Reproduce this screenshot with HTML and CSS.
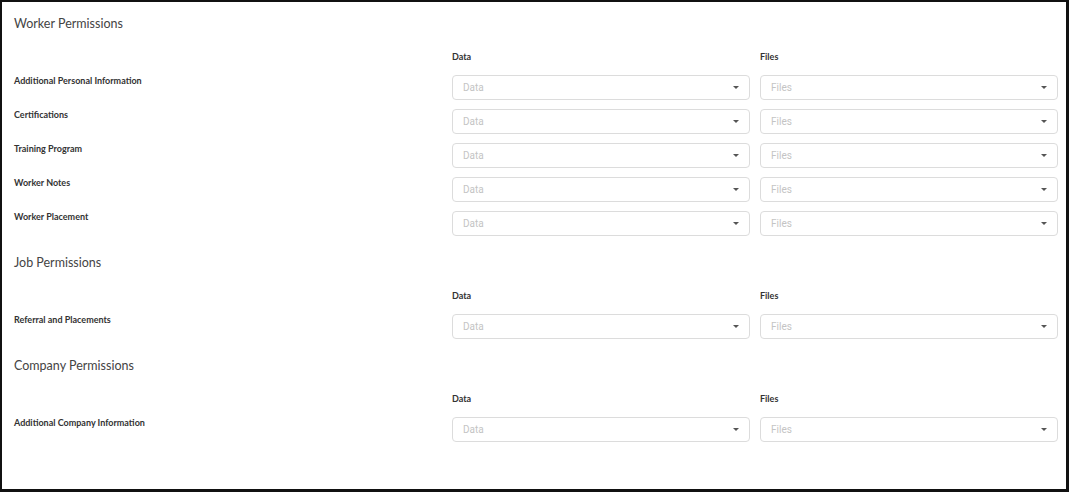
FILE: index.html
```html
<!DOCTYPE html>
<html>
<head>
<meta charset="utf-8">
<link rel="stylesheet" href="styles.css">
</head>
<body>
<div class="panel">
  <section class="group">
    <h2 class="group-title">Worker Permissions</h2>
    <div class="grid">
      <div></div><div class="col-head">Data</div><div class="col-head">Files</div>
      <div class="row-label">Additional Personal Information</div>
      <div class="select"><span>Data</span><i class="caret"></i></div>
      <div class="select"><span>Files</span><i class="caret"></i></div>
      <div class="row-label">Certifications</div>
      <div class="select"><span>Data</span><i class="caret"></i></div>
      <div class="select"><span>Files</span><i class="caret"></i></div>
      <div class="row-label">Training Program</div>
      <div class="select"><span>Data</span><i class="caret"></i></div>
      <div class="select"><span>Files</span><i class="caret"></i></div>
      <div class="row-label">Worker Notes</div>
      <div class="select"><span>Data</span><i class="caret"></i></div>
      <div class="select"><span>Files</span><i class="caret"></i></div>
      <div class="row-label">Worker Placement</div>
      <div class="select"><span>Data</span><i class="caret"></i></div>
      <div class="select"><span>Files</span><i class="caret"></i></div>
    </div>
  </section>
  <section class="group">
    <h2 class="group-title">Job Permissions</h2>
    <div class="grid">
      <div></div><div class="col-head">Data</div><div class="col-head">Files</div>
      <div class="row-label">Referral and Placements</div>
      <div class="select"><span>Data</span><i class="caret"></i></div>
      <div class="select"><span>Files</span><i class="caret"></i></div>
    </div>
  </section>
  <section class="group">
    <h2 class="group-title">Company Permissions</h2>
    <div class="grid">
      <div></div><div class="col-head">Data</div><div class="col-head">Files</div>
      <div class="row-label">Additional Company Information</div>
      <div class="select"><span>Data</span><i class="caret"></i></div>
      <div class="select"><span>Files</span><i class="caret"></i></div>
    </div>
  </section>
</div>
</body>
</html>
```
FILE: styles.css
```css
* { box-sizing: border-box; }
html, body { margin: 0; padding: 0; background: #fff; }
body { width: 1069px; height: 492px; }

.panel {
  width: 1069px;
  height: 492px;
  border-style: solid;
  border-color: #111;
  border-width: 2px 3px 3px 2px;
  padding: 11px 9px 0 12px;
  font-family: Lato, "Open Sans", sans-serif;
  color: #333;
}

.group + .group { margin-top: 16px; }

.group-title {
  margin: 0 0 15px 0;
  padding-top: 1px;
  font-size: 12.5px;
  line-height: 20px;
  font-weight: 400;
  color: #444;
}

.grid {
  display: grid;
  grid-template-columns: 428px 298px 298px;
  column-gap: 10px;
  row-gap: 9px;
}

.col-head {
  font-size: 9px;
  font-weight: 700;
  line-height: 14px;
  color: #333;
  padding-top: 1px;
  margin-bottom: 2px;
}

.row-label {
  font-size: 9px;
  font-weight: 700;
  line-height: 11px;
  color: #333;
}

.select {
  height: 25px;
  border: 1px solid #dcdcdc;
  border-radius: 4px;
  display: flex;
  align-items: center;
  justify-content: space-between;
  padding: 0 10px 0 10px;
  font-family: Roboto, "Liberation Sans", sans-serif;
  font-size: 10px;
  color: #c4c4c4;
}

.caret {
  width: 0;
  height: 0;
  border-left: 3px solid transparent;
  border-right: 3px solid transparent;
  border-top: 3px solid #555;
}
```
